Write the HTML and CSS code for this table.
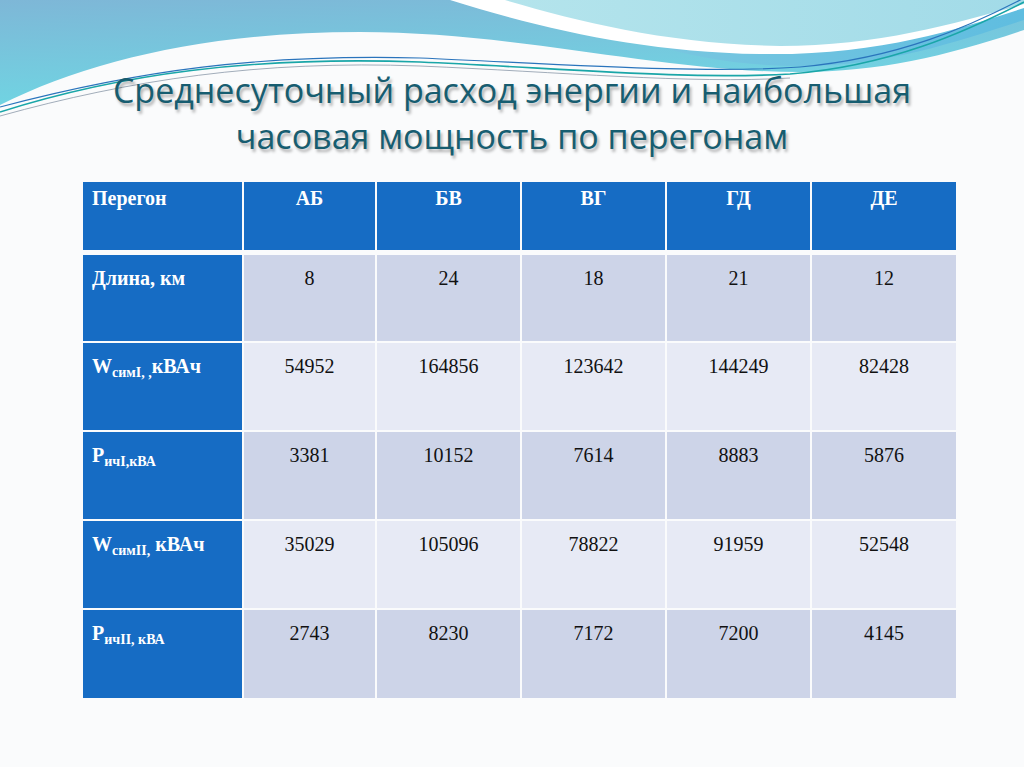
FILE: index.html
```html
<!DOCTYPE html>
<html lang="ru">
<head>
<meta charset="utf-8">
<title>Среднесуточный расход энергии</title>
<link rel="stylesheet" href="styles.css">
</head>
<body>
<div class="slide">
  <svg class="wave" width="1024" height="170" viewBox="0 0 1024 170" aria-hidden="true">
    <defs>
      <linearGradient id="gBlue" x1="0" y1="0" x2="0.3" y2="1">
        <stop offset="0" stop-color="#7eb7d7"/>
        <stop offset="1" stop-color="#6fd6e3"/>
      </linearGradient>
      <linearGradient id="gCyan" x1="0" y1="0" x2="1" y2="0">
        <stop offset="0" stop-color="#b4e4ec"/>
        <stop offset="1" stop-color="#a2dbe8"/>
      </linearGradient>
      <linearGradient id="gBand" x1="0" y1="0" x2="1" y2="0">
        <stop offset="0" stop-color="#7fc9e0"/>
        <stop offset="1" stop-color="#5fbde0"/>
      </linearGradient>
    </defs>
    <path d="M0,0 H1024 V30 C950,55 880,72 800,72 C660,72 520,32 360,32 C210,32 90,60 0,105 Z" fill="url(#gBlue)"/>
    <path d="M560,0 C620,40 700,66 800,66 C890,66 960,40 1024,20 V0 Z" fill="url(#gBand)"/>
    <path d="M450,0 C540,28 640,52 760,54 C880,56 960,28 1024,8 V0 Z" fill="#ffffff"/>
    <path d="M505,0 C580,22 670,44 780,46 C880,46 960,22 1024,4 V0 Z" fill="url(#gCyan)"/>
    <path d="M0,112 C120,74 250,56 420,62 C560,68 680,80 790,74 C890,66 965,32 1024,2" fill="none" stroke="#1aa6a8" stroke-width="1.6"/>
    <path d="M0,107 C140,70 260,54 420,58 C560,64 700,74 800,67 C900,58 970,26 1024,-2" fill="none" stroke="#2a74bc" stroke-width="1.2"/>
    <path d="M0,116 C130,80 260,60 420,66 C560,72 690,84 790,78" fill="none" stroke="#8a98a8" stroke-width="0.8"/>
  </svg>

  <h1 class="title"><span class="line">Среднесуточный расход энергии и наибольшая</span><span class="line">часовая мощность по перегонам</span></h1>

  <div class="table">
    <div class="cell head label">Перегон</div>
    <div class="cell head">АБ</div>
    <div class="cell head">БВ</div>
    <div class="cell head">ВГ</div>
    <div class="cell head">ГД</div>
    <div class="cell head">ДЕ</div>

    <div class="cell label">Длина, км</div>
    <div class="cell dark">8</div>
    <div class="cell dark">24</div>
    <div class="cell dark">18</div>
    <div class="cell dark">21</div>
    <div class="cell dark">12</div>

    <div class="cell label">W<sub>симI, ,</sub>кВАч</div>
    <div class="cell light">54952</div>
    <div class="cell light">164856</div>
    <div class="cell light">123642</div>
    <div class="cell light">144249</div>
    <div class="cell light">82428</div>

    <div class="cell label">P<sub>ичI,кВА</sub></div>
    <div class="cell dark">3381</div>
    <div class="cell dark">10152</div>
    <div class="cell dark">7614</div>
    <div class="cell dark">8883</div>
    <div class="cell dark">5876</div>

    <div class="cell label">W<sub>симII,</sub> кВАч</div>
    <div class="cell light">35029</div>
    <div class="cell light">105096</div>
    <div class="cell light">78822</div>
    <div class="cell light">91959</div>
    <div class="cell light">52548</div>

    <div class="cell label">P<sub>ичII, кВА</sub></div>
    <div class="cell dark">2743</div>
    <div class="cell dark">8230</div>
    <div class="cell dark">7172</div>
    <div class="cell dark">7200</div>
    <div class="cell dark">4145</div>
  </div>
</div>
</body>
</html>
```

FILE: styles.css
```css
html, body {
  margin: 0;
  padding: 0;
  background: #fafbfc;
}

.slide {
  position: relative;
  width: 1024px;
  height: 767px;
  overflow: hidden;
  background: #fafbfc;
}

.wave {
  position: absolute;
  left: 0;
  top: 0;
  display: block;
}

.title {
  position: relative;
  margin: 0;
  padding-top: 67px;
  font-family: "Open Sans", "DejaVu Sans", sans-serif;
  font-weight: 400;
  font-size: 34px;
  line-height: 46px;
  letter-spacing: 0;
  text-align: center;
  color: #175d70;
  text-shadow: 2px 3px 3px rgba(0, 0, 0, 0.3);
}

.line {
  display: block;
}

.table {
  display: grid;
  grid-template-columns: 159px 131px 143px 143px 143px 144px;
  grid-template-rows: 71px 86px 87px 87px 87px 88px;
  column-gap: 2px;
  row-gap: 2px;
  margin: 23px 0 0 83px;
  width: max-content;
  font-family: "Liberation Serif", "DejaVu Serif", serif;
  font-size: 20px;
  line-height: 22px;
}

.cell {
  padding-top: 12px;
  text-align: center;
  color: #111;
}

.head {
  padding-top: 5px;
  margin-bottom: 3px;
  background: #166cc4;
  color: #fff;
  font-weight: 700;
}

.label {
  text-align: left;
  padding-left: 9px;
  background: #166cc4;
  color: #fff;
  font-weight: 700;
}

.head.label {
  padding-top: 5px;
}

.dark {
  background: #cdd4e8;
}

.light {
  background: #e7eaf5;
}

sub {
  font-size: 14px;
  vertical-align: -4px;
  line-height: 0;
}
```
